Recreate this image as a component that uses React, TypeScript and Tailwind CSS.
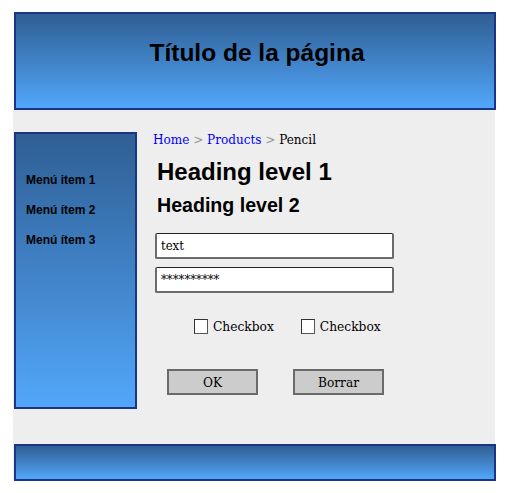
const serif = "font-['DejaVu_Serif_Condensed','DejaVu_Serif',serif] [font-stretch:condensed]";
const sans = "font-['Liberation_Sans',Arial,sans-serif]";
const panel = "border-2 border-[#1b3586] bg-gradient-to-b from-[#2f5f94] to-[#52a7fb]";

const menu = ["Menú item 1", "Menú ítem 2", "Menú ítem 3"];

function Checkbox({ label }: { label: string }) {
  return (
    <label className="flex items-center gap-[5px]">
      <span className="w-[14px] h-[15px] bg-white border border-[#333] border-r-[#555] border-b-[#555]" />
      <span className="text-[13.6px] leading-[15px] text-black">{label}</span>
    </label>
  );
}

function Button({ children }: { children: React.ReactNode }) {
  return (
    <button
      type="button"
      className={`w-[91px] h-[26px] bg-[#cccccc] border-2 border-[#6a6a6a] text-[13.5px] text-black ${serif}`}
    >
      {children}
    </button>
  );
}

export default function App() {
  return (
    <div className={`w-[508px] h-[493px] bg-white pt-[12px] ${sans}`}>
      <header className={`ml-[14px] w-[482px] h-[98px] ${panel} flex justify-center pt-[25px] pl-[4px]`}>
        <h1 className="text-[24.5px] leading-[28px] font-bold text-black">Título de la página</h1>
      </header>

      <div className="ml-[13px] w-[482px] h-[371px] bg-[#eeeeee] pt-[22px]">
        <div className="flex">
          <nav className={`ml-[1px] w-[123px] h-[277px] ${panel} pl-[10px] pt-[31px]`}>
            {menu.map((item) => (
              <div key={item} className="text-[12px] leading-[30px] font-bold text-black">
                {item}
              </div>
            ))}
          </nav>

          <main className={`flex-1 pl-[16px] flex flex-col ${serif}`}>
            <div className="text-[13.4px] leading-[16px]">
              <a className="text-[#0000ff]">Home</a>
              <span className="text-[#999]"> &gt; </span>
              <a className="text-[#0000ff]">Products</a>
              <span className="text-[#999]"> &gt; </span>
              <span className="text-black">Pencil</span>
            </div>

            <h1 className={`mt-[10px] ml-[4px] text-[24px] leading-[28px] font-bold text-black ${sans} [font-stretch:normal]`}>
              Heading level 1
            </h1>
            <h2 className={`mt-[7px] ml-[4px] text-[19.6px] leading-[24px] font-bold text-black ${sans} [font-stretch:normal]`}>
              Heading level 2
            </h2>

            <input
              readOnly
              value="text"
              className="mt-[16px] ml-[2px] w-[239px] h-[26px] bg-white border-2 border-[#6b6b6b] border-t-[1px] border-t-[#222] rounded-[2px] px-[4px] text-[13px] text-black outline-none"
            />
            <input
              readOnly
              value="**********"
              className="mt-[8px] ml-[2px] w-[239px] h-[26px] bg-white border-2 border-[#6b6b6b] border-t-[1px] border-t-[#222] rounded-[2px] px-[4px] text-[13px] text-black outline-none"
            />

            <div className="mt-[26px] ml-[41px] flex gap-[27px]">
              <Checkbox label="Checkbox" />
              <Checkbox label="Checkbox" />
            </div>

            <div className="mt-[35px] ml-[14px] flex gap-[35px]">
              <Button>OK</Button>
              <Button>Borrar</Button>
            </div>
          </main>
        </div>

        <footer className={`mt-[35px] ml-[1px] w-[482px] h-[37px] ${panel}`} />
      </div>
    </div>
  );
}
